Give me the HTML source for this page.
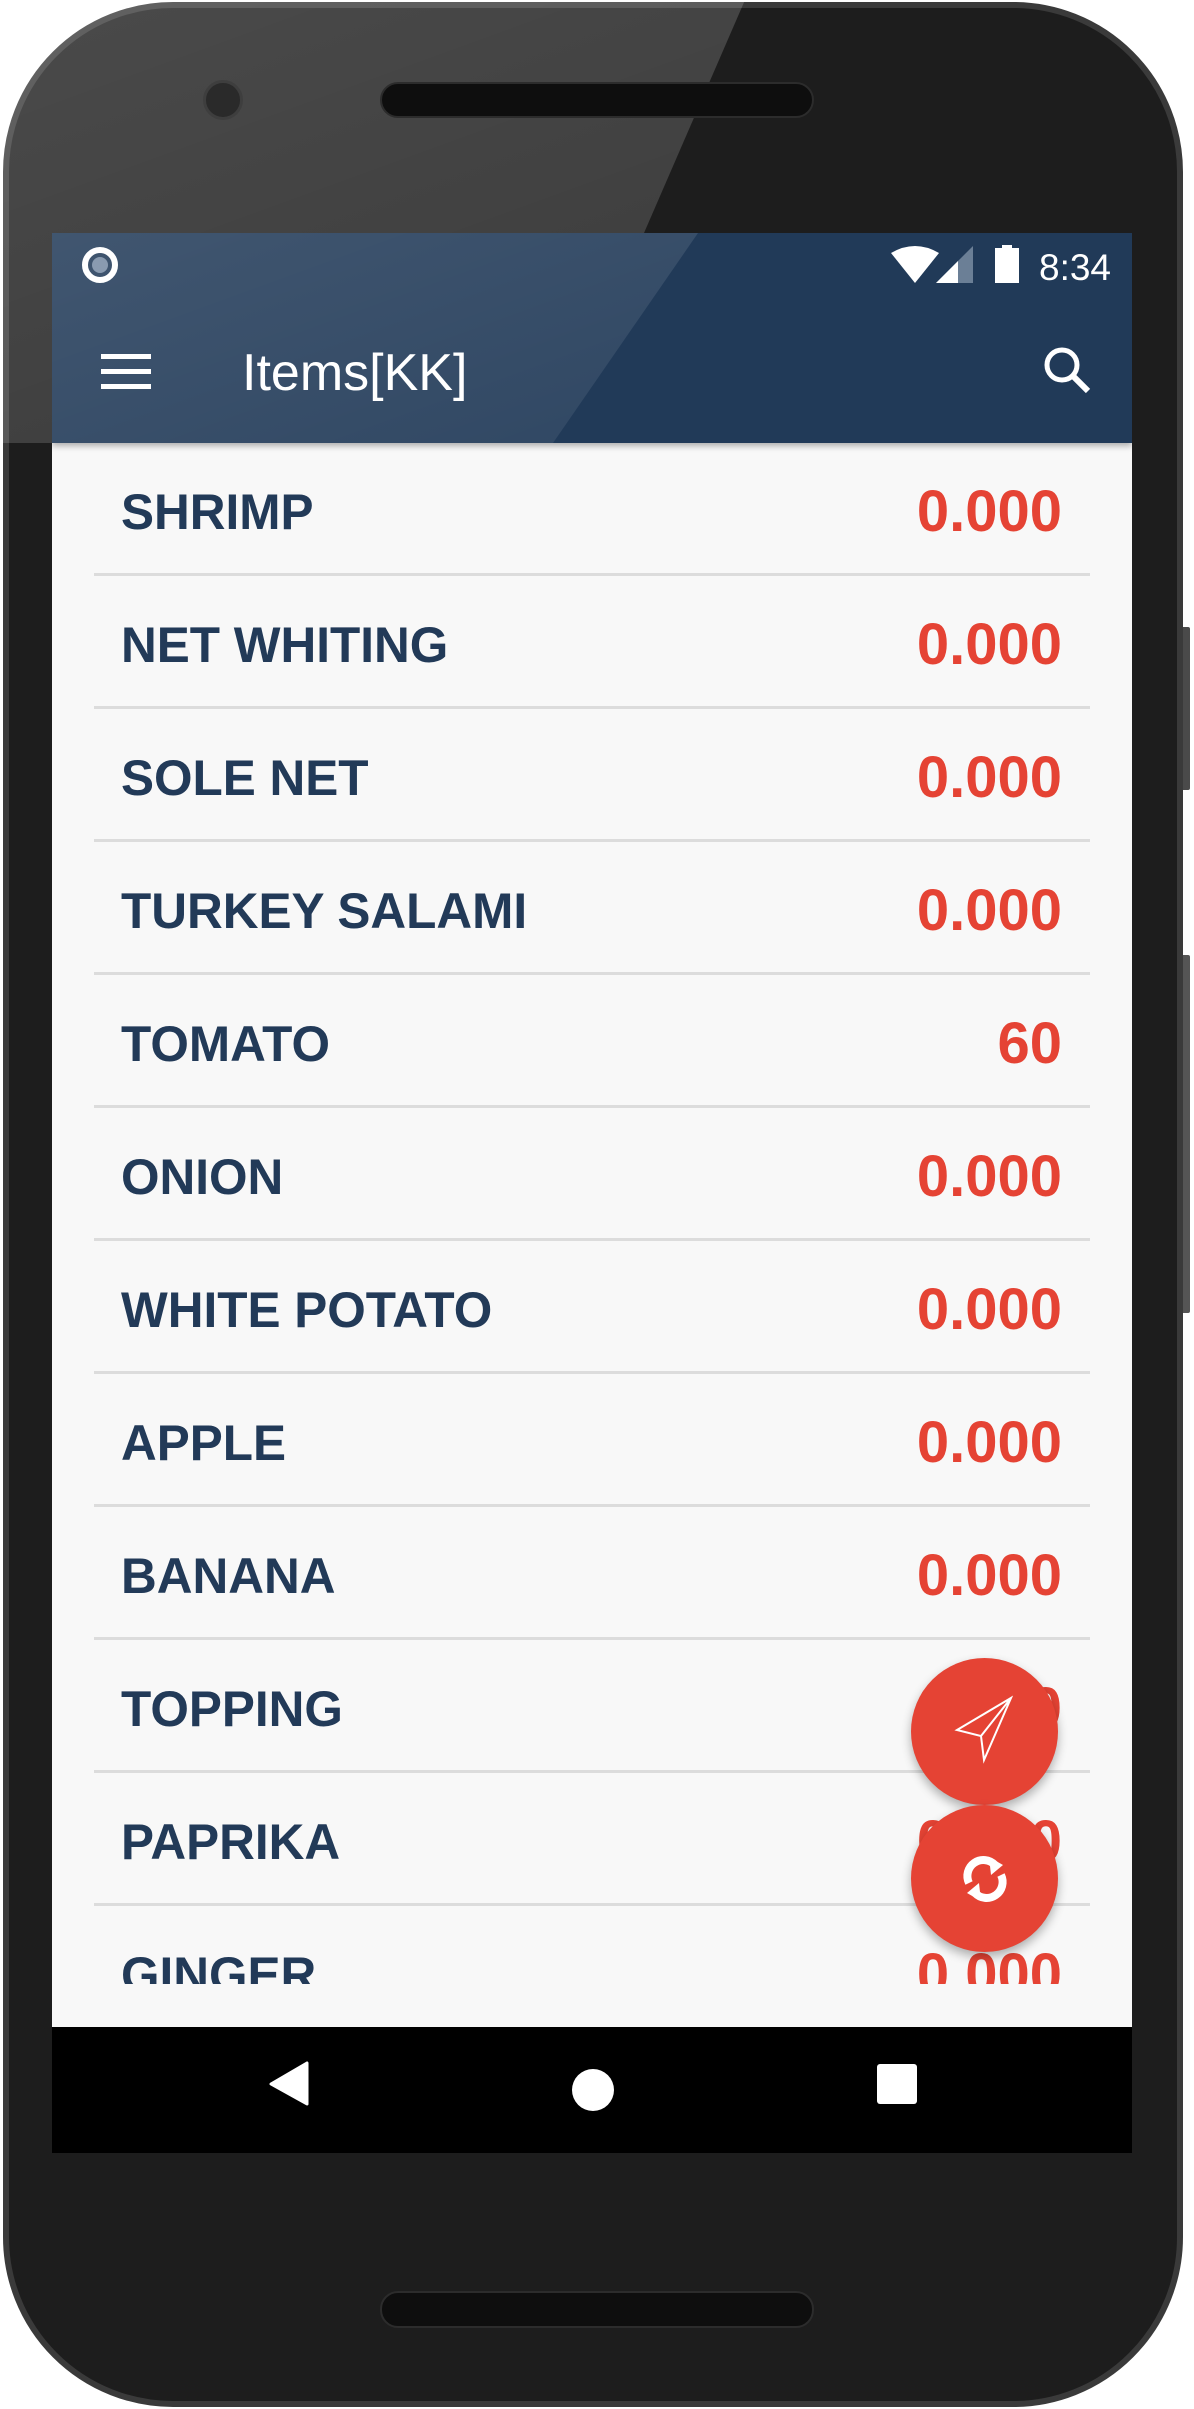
<!DOCTYPE html>
<html><head><meta charset="utf-8"><style>
*{margin:0;padding:0;box-sizing:border-box}
body{width:1194px;height:2409px;background:#fff;position:relative;overflow:hidden;font-family:"Liberation Sans",sans-serif}
.abs{position:absolute}
#body{left:3px;top:2px;width:1180px;height:2405px;border-radius:170px;background:#1d1d1d;border:6px solid #3a3a3a;overflow:hidden}
#glare{left:0;top:0;width:1194px;height:900px;background:linear-gradient(160deg,rgba(255,255,255,0.2),rgba(255,255,255,0.07));clip-path:polygon(0 0,745px 0,553px 443px,0 443px)}
#screen{left:52px;top:233px;width:1080px;height:1920px;background:#f8f8f8;overflow:hidden}
#bar{left:0;top:0;width:1080px;height:210px;background:#213a58;box-shadow:0 3px 6px rgba(0,0,0,.3);z-index:2}
.row{position:absolute;left:0;width:1080px;height:133px}
.row .n{position:absolute;left:69px;top:44px;font-size:50px;font-weight:bold;color:#223a58;line-height:50px;transform:scaleX(.99);transform-origin:left}
.row .v{position:absolute;right:70px;top:42px;font-size:58px;font-weight:bold;color:#e54334;line-height:54px}
.row .d{position:absolute;left:42px;width:996px;bottom:0;height:3px;background:#dcdcdc}
#nav{left:0;top:1794px;width:1080px;height:126px;background:#000}
.fab{width:147px;height:147px;border-radius:50%;background:#e54334;box-shadow:0 5px 10px rgba(0,0,0,.3);z-index:3}
</style></head><body>
<div class="abs" style="left:1179px;top:627px;width:11px;height:163px;background:#4a4a4a;border-radius:2px"></div>
<div class="abs" style="left:1179px;top:955px;width:11px;height:358px;background:#555;border-radius:2px"></div>
<div id="body" class="abs"></div>
<div id="glare" class="abs"></div>
<div class="abs" style="left:380px;top:82px;width:434px;height:36px;border-radius:18px;background:#0e0e0e;border:2px solid #2c2c2c"></div>
<div class="abs" style="left:203px;top:80px;width:40px;height:40px;border-radius:50%;background:#2a2a2a;border:3px solid #3e3e3e"></div>
<div class="abs" style="left:380px;top:2291px;width:434px;height:37px;border-radius:18px;background:#0e0e0e;border:2px solid #2c2c2c"></div>
<div id="screen" class="abs">
 <div id="bar" class="abs">
  <div class="abs" style="left:0;top:0;width:1080px;height:210px;background:linear-gradient(160deg,rgba(255,255,255,0.14),rgba(255,255,255,0.04));clip-path:polygon(0 0,646px 0,501px 210px,0 210px)"></div>
  <svg class="abs" style="left:0;top:0" width="1080" height="210">
   <circle cx="48" cy="32" r="15" fill="none" stroke="#fff" stroke-width="6"/><circle cx="48" cy="32" r="8" fill="#8a9bb0"/>
   <path d="M839 20 Q863 6 887 20 L863 50 Z" fill="#fff"/>
   <path d="M884 50 L921 13 L921 50 Z" fill="#6b7f96"/><path d="M884 50 L906 28 L906 50 Z" fill="#fff"/>
   <rect x="943" y="15" width="24" height="35" fill="#fff"/><rect x="950" y="12" width="10" height="4" fill="#fff"/>
   <text x="987" y="47" font-size="37" fill="#fff" font-family="Liberation Sans">8:34</text>
   <rect x="49" y="121" width="50" height="5" fill="#fff"/><rect x="49" y="136" width="50" height="5" fill="#fff"/><rect x="49" y="151" width="50" height="5" fill="#fff"/>
   <text x="190" y="157" font-size="52" fill="#fff" font-family="Liberation Sans">Items[KK]</text>
   <circle cx="1010" cy="132" r="15" fill="none" stroke="#fff" stroke-width="5"/><path d="M1021 143 L1036 158" stroke="#fff" stroke-width="6"/>
  </svg>
 </div>
 <div class="abs" style="left:0;top:210px;width:1080px;height:1541px;overflow:hidden">
  <div class="row" style="top:0"><span class="n">SHRIMP</span><span class="v">0.000</span><div class="d"></div></div>
  <div class="row" style="top:133px"><span class="n">NET WHITING</span><span class="v">0.000</span><div class="d"></div></div>
  <div class="row" style="top:266px"><span class="n">SOLE NET</span><span class="v">0.000</span><div class="d"></div></div>
  <div class="row" style="top:399px"><span class="n">TURKEY SALAMI</span><span class="v">0.000</span><div class="d"></div></div>
  <div class="row" style="top:532px"><span class="n">TOMATO</span><span class="v">60</span><div class="d"></div></div>
  <div class="row" style="top:665px"><span class="n">ONION</span><span class="v">0.000</span><div class="d"></div></div>
  <div class="row" style="top:798px"><span class="n">WHITE POTATO</span><span class="v">0.000</span><div class="d"></div></div>
  <div class="row" style="top:931px"><span class="n">APPLE</span><span class="v">0.000</span><div class="d"></div></div>
  <div class="row" style="top:1064px"><span class="n">BANANA</span><span class="v">0.000</span><div class="d"></div></div>
  <div class="row" style="top:1197px"><span class="n">TOPPING</span><span class="v">0.000</span><div class="d"></div></div>
  <div class="row" style="top:1330px"><span class="n">PAPRIKA</span><span class="v">0.000</span><div class="d"></div></div>
  <div class="row" style="top:1463px"><span class="n">GINGER</span><span class="v">0.000</span><div class="d"></div></div>
 </div>
 <div class="abs fab" style="left:859px;top:1425px"><svg width="147" height="147"><path d="M46 72 L100 40 L73 102 L70 78 Z M70 78 L100 40" fill="none" stroke="#fff" stroke-width="2"/></svg></div>
 <div class="abs fab" style="left:859px;top:1572px"><svg width="147" height="147"><path d="M58 78 A16 16 0 0 1 84 60" fill="none" stroke="#fff" stroke-width="8"/><path d="M78 52 L92 60 L80 70 Z" fill="#fff"/><path d="M90 70 A16 16 0 0 1 64 88" fill="none" stroke="#fff" stroke-width="8"/><path d="M70 96 L56 88 L68 78 Z" fill="#fff"/></svg></div>
 <div id="nav" class="abs"><svg width="1080" height="126">
  <path d="M255 36 L255 77 L219 57 Z" fill="#fff" stroke="#fff" stroke-width="3" stroke-linejoin="round"/>
  <circle cx="541" cy="63" r="21" fill="#fff"/>
  <rect x="825" y="37" width="40" height="40" rx="3" fill="#fff"/>
 </svg></div>
</div>
</body></html>
